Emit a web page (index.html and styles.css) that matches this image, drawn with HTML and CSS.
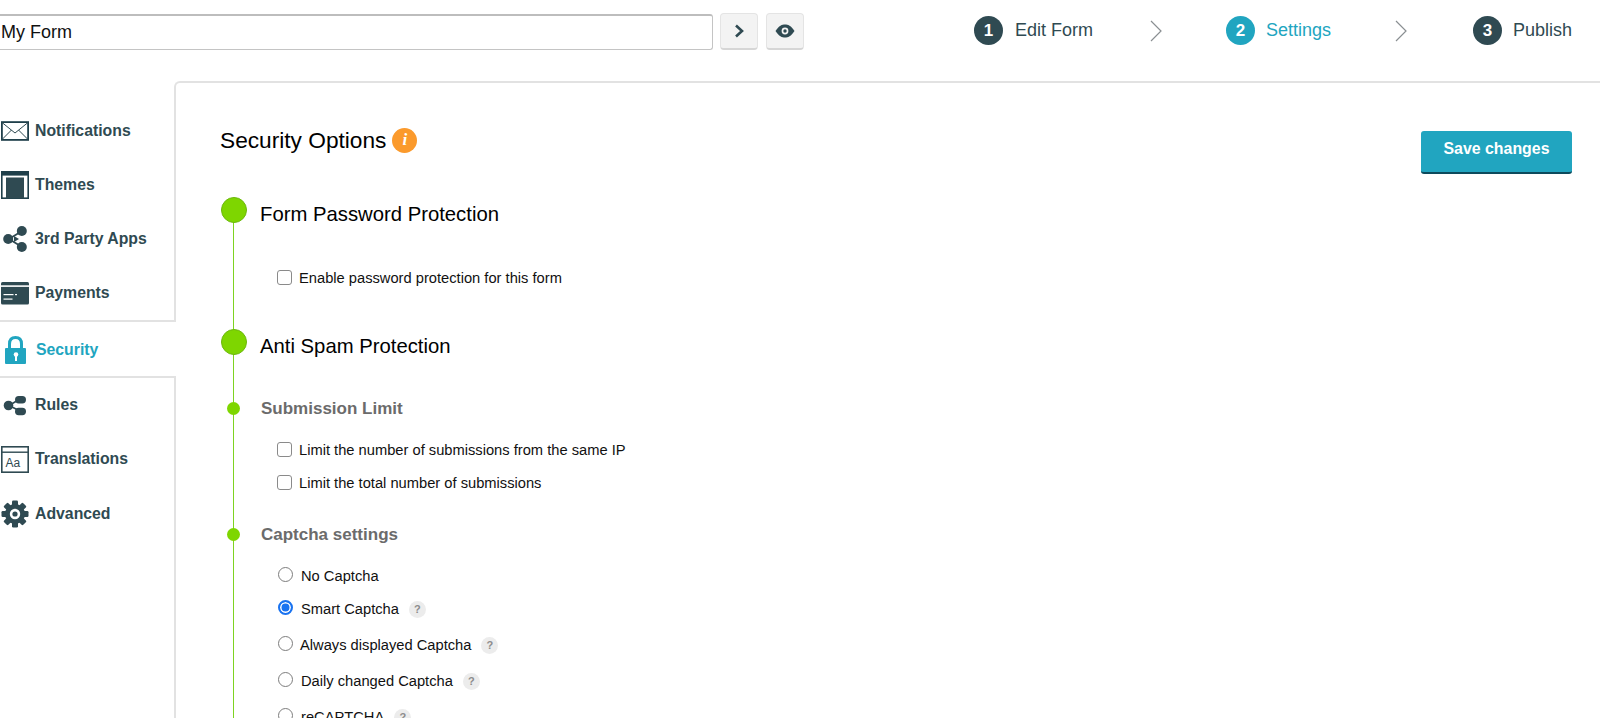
FILE: index.html
```html
<!DOCTYPE html>
<html lang="en">
<head>
<meta charset="utf-8">
<title>My Form - Security</title>
<link rel="stylesheet" href="styles.css">
</head>
<body>
<div class="page">
  <header class="topbar">
    <div class="namebox">
      <input class="name-input" type="text" value="My Form">
      <button class="tool-btn" type="button" aria-label="Next">
        <svg width="12" height="16" viewBox="0 0 12 16"><path d="M3 2.5 L9 8 L3 13.5" fill="none" stroke="#2f4a52" stroke-width="2.6"/></svg>
      </button>
      <button class="tool-btn tool-btn-eye" type="button" aria-label="Preview">
        <svg width="20" height="14" viewBox="0 0 20 14"><path d="M0.5 7 C4 1.5 7 0.5 10 0.5 C13 0.5 16 1.5 19.5 7 C16 12.5 13 13.5 10 13.5 C7 13.5 4 12.5 0.5 7 Z" fill="#2f4a52"/><circle cx="10" cy="7" r="3.4" fill="#f3f3f3"/><circle cx="10" cy="7" r="1.7" fill="#2f4a52"/></svg>
      </button>
    </div>
    <nav class="steps">
      <div class="step step-first"><span class="step-num">1</span><span class="step-label">Edit Form</span></div>
      <svg class="chev chev-1" width="12" height="22" viewBox="0 0 12 22"><path d="M1 1 L11 11 L1 21" fill="none" stroke="#8a8f92" stroke-width="1.2"/></svg>
      <div class="step step-active"><span class="step-num">2</span><span class="step-label">Settings</span></div>
      <svg class="chev chev-2" width="12" height="22" viewBox="0 0 12 22"><path d="M1 1 L11 11 L1 21" fill="none" stroke="#8a8f92" stroke-width="1.2"/></svg>
      <div class="step"><span class="step-num">3</span><span class="step-label">Publish</span></div>
    </nav>
  </header>

  <div class="main">
    <aside class="sidebar">
      <ul class="menu menu-first">
        <li class="menu-item">
          <svg class="menu-icon" viewBox="0 0 28 28"><rect x="0.9" y="5.1" width="26.2" height="17.8" fill="none" stroke="#1f3f4a" stroke-width="1.8"/><path d="M1 5.5 L14 16 L27 5.5 M1 22.5 L10.5 13 M27 22.5 L17.5 13" fill="none" stroke="#2f4a52" stroke-width="1"/></svg>
          Notifications
        </li>
        <li class="menu-item">
          <svg class="menu-icon" viewBox="0 0 28 28"><rect x="0.8" y="0.8" width="26.4" height="26.4" fill="none" stroke="#1f3f4a" stroke-width="1.6"/><rect x="1" y="1" width="26" height="3.6" fill="#1f3f4a"/><rect x="5" y="6.5" width="18" height="21" fill="#2f4a52"/></svg>
          Themes
        </li>
        <li class="menu-item">
          <svg class="menu-icon" viewBox="0 0 28 28"><path d="M8 14 L21 6 M8 14 L21 22" fill="none" stroke="#2f4a52" stroke-width="1.8"/><circle cx="7.2" cy="14" r="5" fill="#2f4a52"/><circle cx="20.8" cy="6" r="5" fill="#2f4a52"/><circle cx="20.8" cy="22" r="5" fill="#2f4a52"/><path d="M13 11 L18 14 L13 17 Z" fill="#2f4a52"/></svg>
          3rd Party Apps
        </li>
        <li class="menu-item">
          <svg class="menu-icon" viewBox="0 0 28 28"><rect x="0" y="3" width="28" height="22.5" rx="1.5" fill="#2f4a52"/><rect x="0" y="6.3" width="28" height="1.6" fill="#fff"/><rect x="2.5" y="15" width="10" height="1.2" fill="#fff"/><rect x="14" y="15" width="2" height="1.2" fill="#fff"/><rect x="2.5" y="19.5" width="9" height="1.2" fill="#fff"/></svg>
          Payments
        </li>
      </ul>
      <div class="menu-item menu-active">
        <svg class="menu-icon" viewBox="0 0 28 28"><path d="M8.5 13 V8 C8.5 3.5 11 1.5 14.5 1.5 C18 1.5 20.5 3.5 20.5 8 V13" fill="none" stroke="#21a5c0" stroke-width="3"/><rect x="4" y="12" width="21" height="16" rx="1" fill="#21a5c0"/><circle cx="15" cy="18.5" r="2.3" fill="#fff"/><rect x="14" y="19" width="2" height="6" fill="#fff"/></svg>
        Security
      </div>
      <ul class="menu menu-last">
        <li class="menu-item">
          <svg class="menu-icon" viewBox="0 0 28 28"><path d="M8 14.5 L19 8 M8 14.5 L19 20" fill="none" stroke="#2f4a52" stroke-width="1.6"/><circle cx="7.5" cy="14.5" r="4.8" fill="#2f4a52"/><rect x="14" y="5" width="11" height="7.4" rx="3.7" fill="#2f4a52"/><rect x="14" y="16.8" width="11" height="7.4" rx="3.7" fill="#2f4a52"/></svg>
          Rules
        </li>
        <li class="menu-item">
          <svg class="menu-icon" viewBox="0 0 28 28"><rect x="0.8" y="1.8" width="26.4" height="25.4" fill="none" stroke="#2f4a52" stroke-width="1.6"/><rect x="1" y="6.5" width="26" height="1.4" fill="#2f4a52"/><text x="4.5" y="22" class="aa">Aa</text></svg>
          Translations
        </li>
        <li class="menu-item">
          <svg class="menu-icon" viewBox="0 0 28 28"><g fill="#2f4a52"><rect x="11" y="0.5" width="6" height="27" rx="1.2"/><rect x="11" y="0.5" width="6" height="27" rx="1.2" transform="rotate(45 14 14)"/><rect x="11" y="0.5" width="6" height="27" rx="1.2" transform="rotate(90 14 14)"/><rect x="11" y="0.5" width="6" height="27" rx="1.2" transform="rotate(135 14 14)"/><circle cx="14" cy="14" r="10"/></g><circle cx="14" cy="14" r="5.2" fill="#fff"/><circle cx="14" cy="14" r="2.6" fill="#2f4a52"/></svg>
          Advanced
        </li>
      </ul>
    </aside>

    <section class="panel">
      <div class="panel-head">
        <h1 class="panel-title">Security Options <span class="info">i</span></h1>
        <button class="save-btn" type="button">Save changes</button>
      </div>

      <div class="timeline">
        <h2 class="major"><span class="dot-big"></span>Form Password Protection</h2>
        <label class="check-row first-row"><input type="checkbox">Enable password protection for this form</label>

        <h2 class="major major-2"><span class="dot-big"></span>Anti Spam Protection</h2>

        <h3 class="minor minor-1"><span class="dot-small"></span>Submission Limit</h3>
        <label class="check-row row-a"><input type="checkbox">Limit the number of submissions from the same IP</label>
        <label class="check-row row-b"><input type="checkbox">Limit the total number of submissions</label>

        <h3 class="minor minor-2"><span class="dot-small"></span>Captcha settings</h3>
        <label class="radio-row radio-a"><input type="radio" name="captcha">No Captcha</label>
        <label class="radio-row radio-b"><input type="radio" name="captcha" checked>Smart Captcha<span class="help">?</span></label>
        <label class="radio-row radio-c"><input type="radio" name="captcha">Always displayed Captcha<span class="help">?</span></label>
        <label class="radio-row"><input type="radio" name="captcha">Daily changed Captcha<span class="help">?</span></label>
        <label class="radio-row"><input type="radio" name="captcha">reCAPTCHA<span class="help">?</span></label>
      </div>
    </section>
  </div>
</div>
</body>
</html>
```
FILE: styles.css
```css
* { box-sizing: border-box; }
html, body { margin: 0; padding: 0; background: #fff; }
body { font-family: "Liberation Sans", Arial, sans-serif; color: #000; }
ul { list-style: none; margin: 0; padding: 0; }
h1, h2, h3 { margin: 0; font-weight: normal; }

.page { height: 718px; overflow: hidden; display: flex; flex-direction: column; }

/* Top bar */
.topbar { height: 81px; flex: none; display: flex; align-items: flex-start; justify-content: space-between; padding: 13px 28px 0 0; }
.namebox { display: flex; gap: 7px; align-items: flex-start; }
.name-input { width: 713px; height: 36px; margin-top: 1px; padding: 0 0 0 1px; border: 1px solid #c4c4c4; border-top: 2px solid #bdbdbd; border-left: 0; border-radius: 0 3px 3px 0; font: 18px "Liberation Sans", Arial, sans-serif; color: #111; background: #fff; outline: none; }
.tool-btn { width: 38px; height: 37px; padding: 0; border: 1px solid #e4e4e4; border-bottom: 2px solid #d6d6d6; border-radius: 4px; background: #f3f3f3; display: flex; align-items: center; justify-content: center; }
.tool-btn-eye { margin-left: 1px; }

.steps { display: flex; align-items: center; height: 35px; }
.step { display: flex; align-items: center; gap: 11px; color: #2f4a52; font-size: 18px; }
.step-first { gap: 12px; }
.step-num { width: 29px; height: 29px; border-radius: 50%; background: #2f4a52; color: #fff; font-weight: bold; font-size: 17px; display: flex; align-items: center; justify-content: center; }
.step-label { white-space: nowrap; }
.step-active { color: #21a5c0; }
.step-active .step-num { background: #21a5c0; }
.chev { flex: none; }
.chev-1 { margin: 0 64px 0 57px; }
.chev-2 { margin: 0 66px 0 64px; }

/* Layout */
.main { flex: 1; display: flex; min-height: 0; }
.sidebar { width: 174px; flex: none; position: relative; z-index: 1; }
.menu-first { padding-top: 23px; height: 241px; border-bottom: 2px solid #e2e2e2; }
.menu-last { border-top: 2px solid #e2e2e2; }
.menu-item { height: 54px; display: flex; align-items: center; gap: 6px; padding-left: 1px; font-size: 15.8px; font-weight: bold; color: #2f4a52; white-space: nowrap; }
.menu-last .menu-item:first-child { padding-bottom: 1px; }
.menu-last .menu-item:last-child { padding-top: 1px; }
.menu-active { margin-right: -2px; padding-top: 2px; background: #fff; color: #21a5c0; gap: 7px; }
.menu-icon { width: 28px; height: 28px; flex: none; }
.aa { font: 12px "Liberation Sans", Arial, sans-serif; fill: #2f4a52; }

.panel { flex: 1; min-width: 0; border-top: 2px solid #e2e2e2; border-left: 2px solid #e2e2e2; border-top-left-radius: 6px; padding: 0 28px 0 45px; }
.panel-head { display: flex; justify-content: space-between; align-items: flex-start; padding-top: 44px; }
.panel-title { font-size: 22.7px; line-height: 26px; margin-left: -1px; display: flex; align-items: center; gap: 6px; }
.info { width: 25px; height: 25px; border-radius: 50%; background: #fb9a2c; color: #fff; font: italic bold 17px "Liberation Serif", serif; display: flex; align-items: center; justify-content: center; }
.save-btn { width: 151px; height: 43px; margin-top: 4px; padding: 0 0 6px; border: 0; border-bottom: 2px solid #0d4a5c; border-radius: 3px; background: #21a5c0; color: #fff; font: bold 15.9px "Liberation Sans", Arial, sans-serif; }

/* Timeline */
.timeline { position: relative; }
.timeline::before { content: ""; position: absolute; left: 11.7px; top: 0; bottom: -200px; width: 1.6px; background: #7ed321; }
.major { position: relative; font-size: 20.3px; line-height: 26px; padding-left: 39px; margin-top: 27px; }
.major-2 { margin-top: 45px; }
.dot-big { position: absolute; left: 0; top: -4px; width: 26px; height: 26px; border-radius: 50%; background: #7ed600; border: 1px solid #6cb80c; }
.minor { position: relative; font-size: 17px; font-weight: bold; line-height: 20px; color: #6b6b6b; padding-left: 40px; }
.minor-1 { margin-top: 40px; }
.minor-2 { margin-top: 32px; }
.dot-small { position: absolute; left: 6px; top: 3px; width: 13px; height: 13px; border-radius: 50%; background: #7ed600; }

.check-row, .radio-row { display: flex; align-items: center; font-size: 14.7px; height: 20px; color: #111; }
.check-row input, .radio-row input { appearance: none; -webkit-appearance: none; margin: 0; flex: none; background: #fff; }
.check-row { padding-left: 56px; }
.check-row input { width: 15px; height: 15px; border: 1px solid #8a8a8a; border-radius: 3px; margin-right: 7px; position: relative; top: -1px; }
.first-row { margin-top: 41px; }
.row-a { margin-top: 21px; }
.row-b { margin-top: 13px; }
.radio-row { padding-left: 57px; margin-top: 16px; }
.radio-a { margin-top: 21px; }
.radio-b { margin-top: 13px; }
.radio-row input { width: 15px; height: 15px; border: 1px solid #7d7d7d; border-radius: 50%; margin-right: 8px; position: relative; top: -2px; }
.radio-c input { margin-right: 7px; }
.radio-row input:checked { border: 2px solid #1a73f0; box-shadow: inset 0 0 0 1.5px #fff; background: #1a73f0; }
.help { width: 17px; height: 17px; margin-left: 10px; border-radius: 50%; background: #ececec; color: #8c8c8c; font-size: 11px; font-weight: bold; display: flex; align-items: center; justify-content: center; }
```
